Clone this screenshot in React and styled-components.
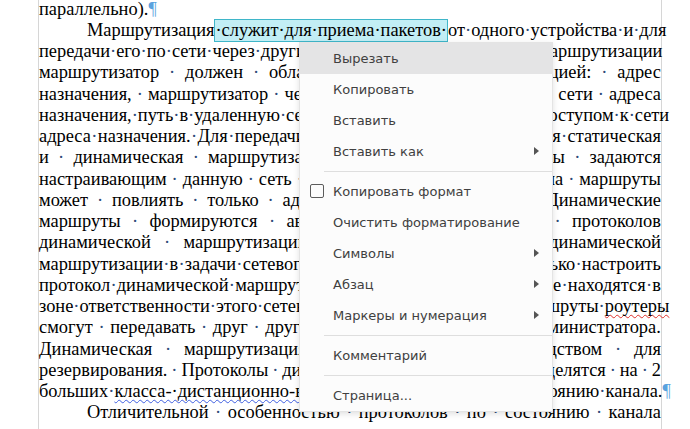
import React from "react";
import styled, { createGlobalStyle } from "styled-components";

const GlobalStyle = createGlobalStyle`
  html, body {
    margin: 0;
    padding: 0;
    height: 100%;
    overflow: hidden;
    background: #ffffff;
  }
  #root {
    position: relative;
    height: 100%;
  }
`;

// a line is a list of tokens; strings are plain words, objects carry a mark
const lines = [
  { words: ["параллельно)."], pilcrow: true },
  {
    indent: true,
    justify: true,
    words: ["Маршрутизация", { sel: " служит для приема пакетов " }, "от", "одного", "устройства", "и", "для"],
  },
  { justify: true, text: "передачи его по сети через другие сети, а для осуществления маршрутизации" },
  { justify: true, text: "маршрутизатор должен обладать следующей информацией: адрес" },
  { justify: true, text: "назначения, маршрутизатор через который доступны все сети адреса" },
  { justify: true, text: "назначения, путь в удаленную сеть, ее маршрут с наилучшим доступом к сети" },
  { justify: true, text: "адреса назначения. Для передачи пакетов по сетям используется статическая" },
  { justify: true, text: "и динамическая маршрутизация. Статические маршруты задаются" },
  { justify: true, text: "настраивающим данную сеть сетевым специалистом, и на маршруты" },
  { justify: true, text: "может повлиять только администратор этой сети. Динамические" },
  { justify: true, text: "маршруты формируются автоматически с помощью протоколов" },
  { justify: true, text: "динамической маршрутизации. Преимущество же динамической" },
  { justify: true, text: "маршрутизации в задачи сетевого инженера обычно входит только настроить" },
  { justify: true, text: "протокол динамической маршрутизации на устройствах, которые находятся в" },
  {
    justify: true,
    words: ["зоне", "ответственности", "этого", "сетевого", "инженера,", "а", "затем", "все", "маршруты", { spell: "роутеры" }],
  },
  { justify: true, text: "смогут передавать друг другу без прямого участия администратора." },
  { justify: true, text: "Динамическая маршрутизация служит лучшим средством для" },
  { justify: true, text: "резервирования. Протоколы динамической маршрутизации делятся на 2" },
  {
    justify: true,
    pilcrow: true,
    words: ["больших", { grammar: "класса- дистанционно-векторные" }, "и", "протоколы", "по", "состоянию", "канала."],
  },
  { indent: true, justify: true, text: "Отличительной особенностью протоколов по состоянию канала" },
];

const menuItems = [
  { label: "Вырезать", active: true },
  { label: "Копировать" },
  { label: "Вставить" },
  { label: "Вставить как", sub: true },
  { sep: true },
  { label: "Копировать формат", check: true },
  { label: "Очистить форматирование" },
  { label: "Символы", sub: true },
  { label: "Абзац", sub: true },
  { label: "Маркеры и нумерация", sub: true },
  { sep: true },
  { label: "Комментарий" },
  { sep: true },
  { label: "Страница..." },
];

const dotted = (s) => s.replace(/ /g, "·");

const App = () => {
  const renderLine = (line, li) => {
    const words = line.words || line.text.split(" ");
    const out = [];
    words.forEach((w, i) => {
      const isLast = i === words.length - 1;
      const glued = typeof w === "object" && w.sel;
      const prevGlued = i > 0 && typeof words[i - 1] === "object" && words[i - 1].sel;
      if (i > 0 && !glued && !prevGlued) out.push(<Dot key={`d${i}`}>·</Dot>);

      let node;
      if (typeof w === "string") {
        node = w;
      } else if (w.sel) {
        node = <Selection>{dotted(w.sel)}</Selection>;
      } else if (w.grammar) {
        node = <Wavy $color="#3f5fe0">{dotted(w.grammar)}</Wavy>;
      } else {
        node = <Wavy $color="#e0302a">{w.spell}</Wavy>;
      }

      if (glued) {
        out.push(React.cloneElement(node, { key: `w${i}` }));
      } else {
        out.push(
          <Word key={`w${i}`} $hang={isLast && line.pilcrow}>
            {node}
            {isLast && line.pilcrow && <Pilcrow>¶</Pilcrow>}
          </Word>
        );
      }
    });
    return (
      <Line key={li} $indent={line.indent} $justify={line.justify}>
        {out}
      </Line>
    );
  };

  return (
    <>
      <GlobalStyle />
      <Page>{lines.map(renderLine)}</Page>
      <Menu>
        {menuItems.map((item, i) =>
          item.sep ? (
            <Separator key={i} />
          ) : (
            <Item key={i} $active={item.active}>
              <IconSlot>{item.check && <CheckBox />}</IconSlot>
              <Label>{item.label}</Label>
              {item.sub && <Arrow />}
            </Item>
          )
        )}
      </Menu>
    </>
  );
};

const Page = styled.div`
  box-sizing: border-box;
  margin: -1.5px 0 0 38px;
  width: 624px;
  min-height: calc(100vh + 2px);
  border-left: 1px solid #d6d6d6;
  border-right: 1px solid #d6d6d6;
  font-family: "Liberation Serif", "Times New Roman", serif;
  font-size: 18.4px;
  color: #000000;
`;

const Line = styled.div`
  display: flex;
  justify-content: ${(p) => (p.$justify ? "space-between" : "flex-start")};
  padding-left: ${(p) => (p.$indent ? "48px" : "0")};
  height: 21.25px;
  line-height: 21.25px;
  white-space: pre;
`;

const Word = styled.span`
  margin-right: ${(p) => (p.$hang ? "-10px" : "0")};
`;

const Dot = styled.span`
  color: #2d4a78;
`;

const Pilcrow = styled.span`
  color: #5aa2de;
`;

const Selection = styled.span`
  margin: -1px 0;
  border: 1px solid #3fb6c9;
  background: #c2eef5;
`;

const Wavy = styled.span`
  text-decoration: underline wavy ${(p) => p.$color};
  text-decoration-thickness: 1px;
  text-decoration-skip-ink: none;
  text-underline-offset: 2px;
`;

const Menu = styled.div`
  position: absolute;
  left: 299px;
  top: 43px;
  width: 252px;
  background: #fcfcfc;
  border: 1px solid #e4e4e4;
  box-shadow: 0 2px 6px rgba(0, 0, 0, 0.12);
  font-family: "DejaVu Sans", Verdana, sans-serif;
  font-size: 13px;
  color: #404040;
`;

const Item = styled.div`
  display: flex;
  align-items: center;
  height: 31px;
  padding: 0 13px 0 10px;
  background: ${(p) => (p.$active ? "#e4e4e5" : "transparent")};
`;

const IconSlot = styled.div`
  display: flex;
  align-items: center;
  width: 23px;
  flex: none;
`;

const CheckBox = styled.div`
  box-sizing: border-box;
  width: 14px;
  height: 14px;
  border: 1.5px solid #5c5c5c;
  border-radius: 2px;
`;

const Label = styled.span`
  flex: 1;
  white-space: nowrap;
`;

const Arrow = styled.span`
  width: 0;
  height: 0;
  border-top: 4.5px solid transparent;
  border-bottom: 4.5px solid transparent;
  border-left: 5px solid #555555;
`;

const Separator = styled.div`
  height: 1px;
  margin: 4px 0 4px 24px;
  background: #dedede;
`;

export default App;
